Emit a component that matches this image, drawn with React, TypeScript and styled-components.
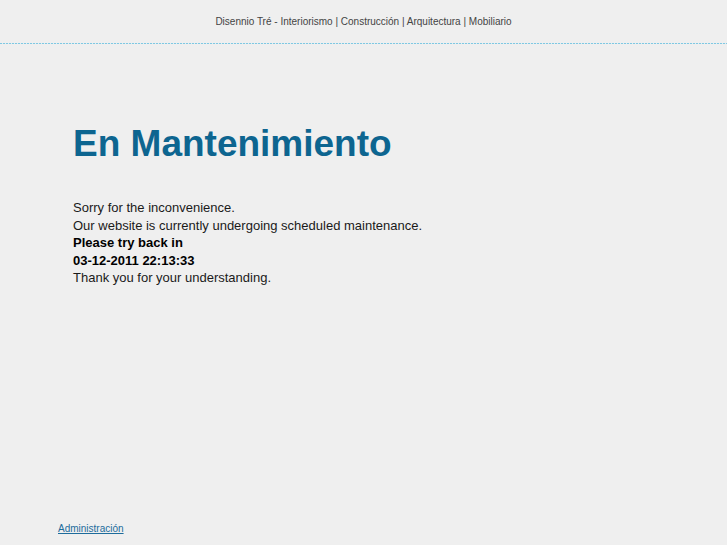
import React from "react";
import styled, { createGlobalStyle } from "styled-components";

const Global = createGlobalStyle`
  html, body { margin: 0; padding: 0; background: #efefef; }
  body { font-family: "Liberation Sans", Arial, sans-serif; color: #222; }
`;

const Page = styled.div`
  min-height: 545px;
  display: flex;
  flex-direction: column;
`;

const Header = styled.header`
  height: 43px;
  display: flex;
  align-items: center;
  justify-content: center;
  font-size: 10px;
  color: #444;
`;

const Rule = styled.div`
  height: 1px;
  background-color: #e2eef2;
  background-image: linear-gradient(to right, #80c8e2 2px, transparent 2px);
  background-size: 3px 1px;
  background-repeat: repeat-x;
`;

const Main = styled.main`
  flex: 1;
  padding: 80px 0 0 73px;
`;

const Title = styled.h1`
  margin: 0 0 35px;
  font-size: 37px;
  font-weight: bold;
  color: #0d6590;
  line-height: 40px;
`;

const Line = styled.p<{ $bold?: boolean }>`
  margin: 0;
  font-size: 13px;
  line-height: 17.6px;
  color: ${(p) => (p.$bold ? "#000" : "#1a1a1a")};
  font-weight: ${(p) => (p.$bold ? "bold" : "normal")};
`;

const Footer = styled.footer`
  padding: 0 0 9px 58px;
`;

const AdminLink = styled.a`
  font-size: 10px;
  color: #1d6c9c;
  text-decoration: underline;
`;

export default function App() {
  return (
    <>
      <Global />
      <Page>
        <Header>Disennio Tré - Interiorismo | Construcción | Arquitectura | Mobiliario</Header>
        <Rule />
        <Main>
          <Title>En Mantenimiento</Title>
          <Line>Sorry for the inconvenience.</Line>
          <Line>Our website is currently undergoing scheduled maintenance.</Line>
          <Line $bold>Please try back in</Line>
          <Line $bold>03-12-2011 22:13:33</Line>
          <Line>Thank you for your understanding.</Line>
        </Main>
        <Footer>
          <AdminLink href="#">Administración</AdminLink>
        </Footer>
      </Page>
    </>
  );
}
